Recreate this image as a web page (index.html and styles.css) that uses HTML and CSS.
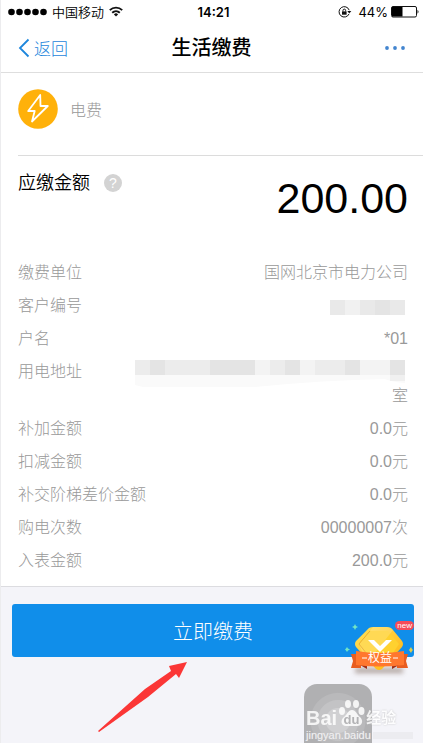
FILE: index.html
```html
<!DOCTYPE html>
<html lang="zh-CN">
<head>
<meta charset="utf-8">
<meta name="viewport" content="width=device-width, initial-scale=1">
<title>生活缴费</title>
<link rel="stylesheet" href="styles.css">
</head>
<body>
<div class="app">
  <div class="status">
    <div class="status-left">
      <svg class="signal" width="39" height="8" viewBox="0 0 39 8" aria-hidden="true"><circle cx="3.5" cy="4" r="3.3"/><circle cx="11.5" cy="4" r="3.3"/><circle cx="19.5" cy="4" r="3.3"/><circle cx="27.5" cy="4" r="3.3"/><circle cx="35.5" cy="4" r="3.3"/></svg>
      <span class="carrier">中国移动</span>
      <svg width="14" height="11" viewBox="0 0 14 11" fill="none" stroke="#111" stroke-width="1.9" aria-hidden="true"><path d="M.8 4.1a9 9 0 0 1 12.4 0M3.2 6.7a5.5 5.5 0 0 1 7.6 0"/><path d="M4.9 8.4a3 3 0 0 1 4.2 0L7 10.6z" fill="#111" stroke="none"/></svg>
    </div>
    <span class="time">14:21</span>
    <div class="status-right">
      <svg width="14" height="12" viewBox="0 0 14 12" fill="none" stroke="#111" aria-hidden="true"><path d="M11.2 4.2A5.2 5.2 0 1 0 11 8"/><path d="M9.3 5h4l-2 2.6z" fill="#111" stroke="none"/><path d="M4 5.4h4.6v3.3H4z" fill="#111" stroke="none"/><path d="M5 5.5V4.4a1.3 1.3 0 0 1 2.6 0v1.1"/></svg>
      <span class="percent">44%</span>
      <svg width="28" height="12" viewBox="0 0 28 12" aria-hidden="true"><rect x=".5" y=".5" width="25" height="10.5" rx="1.5" fill="#fff" stroke="#111"/><path d="M1 1h10.500v9.500H1z" fill="#000"/><path d="M26.500 3.700q2 2 0 4z" fill="#111"/></svg>
    </div>
  </div>
  <header class="nav">
    <a class="back" href="#"><svg width="12" height="20" viewBox="0 0 12 20" fill="none" stroke="#1d86dc" stroke-width="1.800" aria-hidden="true"><path d="M10.500 1.500 2 10l8.500 8.500"/></svg>返回</a>
    <h1 class="title">生活缴费</h1>
    <button class="more" type="button" aria-label="更多"><svg width="20" height="4" viewBox="0 0 20 4" fill="#4385cf"><circle cx="2" cy="2" r="1.900"/><circle cx="10" cy="2" r="1.900"/><circle cx="18" cy="2" r="1.900"/></svg></button>
  </header>
  <main>
    <section class="bill">
      <div class="category">
        <svg width="40" height="40" viewBox="0 0 40 40" aria-hidden="true"><circle cx="20" cy="20" r="19.800" fill="#ffb10a"/><path d="M22.200 6 10.200 22h6.500l-2.700 10.500L29.800 17h-7.300z" fill="none" stroke="#fff" stroke-width="1.800" stroke-linejoin="round"/></svg>
        <span>电费</span>
      </div>
      <div class="amount">
        <div class="amount-label">应缴金额<button class="help" type="button" aria-label="应缴金额说明">?</button></div>
        <strong class="amount-value">200.00</strong>
      </div>
      <dl class="details">
        <div class="row"><dt>缴费单位</dt><dd>国网北京市电力公司</dd></div>
        <div class="row"><dt>客户编号</dt><dd><svg class="mask" width="75" height="15" viewBox="0 0 75 15" aria-hidden="true"><path fill="#e9e9e9" d="M0 0h75v15H0z"/><path fill="#f1f1f1" d="M15 0h15v15H15z"/><path fill="#e4e4e4" d="M45 0h15v15H45z"/></svg></dd></div>
        <div class="row"><dt>户名</dt><dd>*01</dd></div>
        <div class="row"><dt>用电地址</dt><dd class="address"><svg class="mask" width="270" height="28" viewBox="0 0 270 28" aria-hidden="true"><path fill="#fafafa" d="M0 15h270v8q-12-1-20-4-60 1-130 8H8L0 25z"/><path fill="#ececec" d="M0 0h270v15H0z"/><path fill="#e4e4e4" d="M15 0h15v15H15zM75 0h45v15H75zM150 0h15v15h-15zM210 0h15v15h-15zM255 0h15v15h-15z"/><path fill="#f3f3f3" d="M120 0h15v15h-15zM165 0h15v15h-15zM225 0h30v15h-30z"/><path fill="#f0f0f0" d="M255 15h15v6h-15z"/></svg>室</dd></div>
        <div class="row"><dt>补加金额</dt><dd>0.0元</dd></div>
        <div class="row"><dt>扣减金额</dt><dd>0.0元</dd></div>
        <div class="row"><dt>补交阶梯差价金额</dt><dd>0.0元</dd></div>
        <div class="row"><dt>购电次数</dt><dd>00000007次</dd></div>
        <div class="row"><dt>入表金额</dt><dd>200.0元</dd></div>
      </dl>
    </section>
    <div class="action">
      <button class="pay" type="button">立即缴费</button>
      <svg class="arrow" width="92" height="76" viewBox="0 0 92 76" aria-hidden="true"><path d="M0 71 47 29 73 11 71 6 89 2 81 18 78 14 50 37 1 72z" fill="#fb3636"/></svg>
      <a class="benefit" href="#" aria-label="权益">
        <svg width="70" height="56" viewBox="0 0 70 56" aria-hidden="true">
          <defs><linearGradient id="gold" x1="0" y1="0" x2="1" y2="1"><stop stop-color="#ffe25c"/><stop offset="1" stop-color="#ffb20c"/></linearGradient><filter id="soft" x="-30%" y="-100%" width="160%" height="300%"><feGaussianBlur stdDeviation="2.500"/></filter></defs>
          <path d="M10 45h48v5H10z" fill="#69503f" opacity=".5" filter="url(#soft)"/>
          <path d="M22 7q2-3 6-3h14q4 0 6 3l9 11q2 3 0 6L37 46q-3 2-6 0L11 24q-2-3 0-6z" fill="url(#gold)"/>
          <path d="M25 8h18l11 13-8 12H22l-8-12z" fill="#ffd12f"/><path d="M25 8 14 21l8 10" fill="none" stroke="#e9a719"/><path d="M28 4h14q4 0 6 3L29 31H18l-4-10L25 8z" fill="#fff" opacity=".18"/>
          <path d="M23 17h6l6 6 6-6h6L35 29z" fill="#fff"/>
          <path d="M6 31h10v14H6l2-7zM52 31h11l-2 7 2 7H52z" fill="#e85d20"/>
          <path d="m15 42 7 4v-5zM54 42l-7 4v-5z" fill="#9e2f19"/>
          <path d="M11 28q24 4 48 0v14q-24 3-48 0z" fill="#ff772e"/>
          <path d="M17 35h5M48 35h5" stroke="#fff"/>
          <path d="m10 1 1 2 2 1-2 1-1 2-1-2-2-1 2-1zM2 24l1 1.500 2 1-2 1L2 29l-1-1.500-1-1 1-1z" fill="#72e5c4"/><path d="m66 24 1 2 1 1-1 1-1 2-2-3z" fill="#e1cc48"/>
          <text class="ribbon" x="35" y="39" text-anchor="middle">权益</text>
        </svg>
        <span class="new">new</span>
      </a>
    </div>
  </main>
  <div class="watermark">
    <div class="tile"></div>
    <div class="brand">
      <span>Bai</span>
      <svg width="27" height="28" viewBox="0 0 27 28" aria-hidden="true"><g fill="#fff"><ellipse cx="4" cy="12" rx="3" ry="4"/><ellipse cx="10" cy="5" rx="3" ry="4"/><ellipse cx="18" cy="5" rx="3" ry="4"/><ellipse cx="23.500" cy="12" rx="3" ry="4"/><path d="M14 11c4 0 5 5 8 7 4 4 2 9-3 9H8c-5 0-6-6-2-9 3-2 4-7 8-7z"/></g><text class="paw-text" x="13.500" y="25" text-anchor="middle">du</text></svg>
      <span class="brand-cn">经验</span>
    </div>
    <div class="domain">jingyan.baidu<i></i></div>
  </div>
</div>
</body>
</html>
```

FILE: styles.css
```css
* { box-sizing: border-box; }
body {
  margin: 0;
  background: #f4f4f9;
  color: #000;
  font-family: "Liberation Sans", "Noto Sans CJK SC", sans-serif;
  font-size: 16px;
}
button { border: 0; padding: 0; background: none; font: inherit; cursor: pointer; }
svg { display: block; flex: none; }
a { text-decoration: none; }
.app {
  position: relative;
  min-height: 100vh;
  overflow: hidden;
  border-left: 1px solid #ececee;
}
.status, .nav {
  display: grid;
  grid-template-columns: 1fr auto 1fr;
  align-items: center;
  background: #fff;
}
.status {
  height: 23px;
  padding: 0 4px 0 7px;
  font-family: Inter, "Noto Sans CJK SC", sans-serif;
  font-size: 13px;
}
.status-left, .status-right { display: flex; align-items: center; gap: 5px; }
.status-right { justify-content: flex-end; gap: 3px; }
.percent { margin-left: 3px; }
.carrier { font-weight: 350; line-height: 18px; }
.signal { fill: #000; }
.time { font-weight: 600; }
.nav {
  height: 50px;
  padding: 0 18px 0 17px;
  border-bottom: 1px solid #dedede;
}
.back {
  display: flex;
  align-items: center;
  gap: 4px;
  color: #1d86dc;
  font-size: 17px;
  font-weight: 300;
}
.title { margin: 0; font-size: 20px; font-weight: 500; line-height: 28px; }
.more { justify-self: end; padding: 8px 0; }
.bill {
  background: #fff;
  border-bottom: 1px solid #dcdce0;
  padding: 0 15px 14px 17px;
}
.category {
  display: flex;
  align-items: center;
  gap: 12px;
  height: 83px;
  margin-right: -15px;
  padding-bottom: 10px;
  border-bottom: 1px solid #dcdcdc;
  color: #999;
  font-weight: 300;
}
.amount {
  display: flex;
  justify-content: space-between;
  align-items: flex-start;
  height: 105px;
  padding-top: 14px;
}
.amount-label {
  display: flex;
  align-items: center;
  gap: 14px;
  font-size: 18px;
  font-weight: 350;
  line-height: 26px;
}
.help {
  width: 18px;
  height: 18px;
  border-radius: 50%;
  background: #d3d3d3;
  color: #fff;
  font-size: 14px;
  line-height: 18px;
}
.amount-value { font-size: 43px; font-weight: 400; line-height: 56px; }
.details {
  display: flex;
  flex-direction: column;
  gap: 10px;
  margin: 0;
  color: #999;
  font-weight: 300;
  line-height: 23px;
}
.row { display: flex; justify-content: space-between; gap: 16px; }
dd { margin: 0; text-align: right; }
.mask { margin: 6px 3px 0 0; }
.address .mask { margin: 0 3px -4px 0; }
.action { position: relative; padding: 17px 9px 0 11px; }
.pay {
  display: block;
  width: 100%;
  height: 53px;
  border-radius: 3px;
  background: #108eea;
  color: #fff;
  font-size: 20px;
  font-weight: 300;
}
.arrow { position: absolute; left: 97px; top: 73px; }
.benefit { position: absolute; right: 8px; top: 36px; }
.ribbon { fill: #fff; font-size: 12px; }
.new {
  position: absolute;
  right: 1px;
  top: -2px;
  padding: 0 2px;
  border-radius: 5px;
  background: #f64c59;
  color: #fff;
  font-size: 8px;
  line-height: 9px;
}
.watermark { position: absolute; left: 303px; bottom: 0; width: 112px; height: 59px; }
.tile {
  position: absolute;
  left: 0;
  top: 0;
  width: 68px;
  height: 76px;
  border-radius: 13px;
  background: radial-gradient(circle at 50% 48%, #d0d0d2 0 12px, #c3c3c5 13px 20px, #b9b9bb 21px 27px, #b0b0b2 28px);
}
.brand {
  position: absolute;
  left: 2px;
  top: 15px;
  display: flex;
  align-items: flex-end;
  gap: 1px;
  color: #fff;
  font-size: 20px;
  font-weight: 700;
  line-height: 18px;
  opacity: .85;
}
.brand-cn { font-size: 15px; text-shadow: 0 0 2px #bbb; }
.paw-text { fill: #b0b0b2; font-size: 13px; font-weight: 700; }
.domain {
  position: absolute;
  left: 2px;
  bottom: 1px;
  display: flex;
  align-items: center;
  gap: 2px;
  color: #f0f0f2;
  font-size: 11px;
  line-height: 14px;
  text-shadow: 0 0 1px #ccc;
}
.domain i { width: 40px; height: 7px; background: #ececf0; }
```
